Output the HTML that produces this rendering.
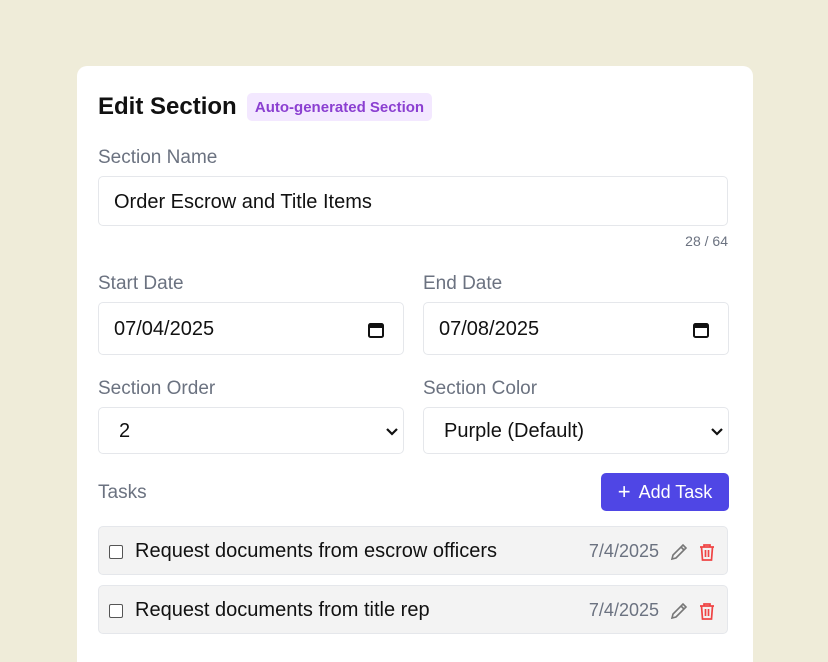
<!DOCTYPE html>
<html><head><style>
html,body{margin:0;width:828px;height:662px;overflow:hidden}
body{background:#efecd9;font-family:"Liberation Sans",sans-serif;position:relative}
.card{position:absolute;left:77px;top:66px;width:676px;height:596px;background:#fff;border-radius:10px 10px 0 0}
.a{position:absolute}
.lbl{font-size:19px;color:#6b7280}
.inp{position:absolute;border:1px solid #e5e7eb;border-radius:5px;box-sizing:border-box;background:#fff;font-size:20px;color:#111;display:flex;align-items:center;padding-left:15px;padding-top:2px}
.task{position:absolute;left:98px;width:630px;height:49px;background:#f3f3f3;border:1px solid #e5e7eb;border-radius:5px;box-sizing:border-box;display:flex;align-items:center;font-size:20px;color:#111;padding-top:2px}
.cb{width:12px;height:12px;border:1px solid #555;border-radius:2px;margin-left:10px;margin-right:12px;background:#fff}
.dt{position:absolute;right:68px;color:#6b7280;font-size:18px}
</style></head><body>
<div class="card"></div>
<div class="a" style="left:98px;top:93px;font-size:24px;font-weight:bold;color:#111">Edit Section</div>
<div class="a" style="left:247px;top:93px;width:185px;height:28px;background:#f3e8ff;border-radius:5px;color:#8b3fd1;font-size:15px;font-weight:bold;display:flex;align-items:center;justify-content:center">Auto-generated Section</div>
<div class="a lbl" style="left:98px;top:147px">Section Name</div>
<div class="inp" style="left:98px;top:176px;width:630px;height:50px">Order Escrow and Title Items</div>
<div class="a" style="right:100px;top:233px;font-size:14px;color:#6b7280">28 / 64</div>
<div class="a lbl" style="left:98px;top:273px">Start Date</div>
<div class="a lbl" style="left:423px;top:273px">End Date</div>
<div class="inp" style="left:98px;top:302px;width:306px;height:53px">07/04/2025<svg class="a" style="right:18px" width="18" height="18" viewBox="0 0 18 18"><rect x="2" y="3" width="14" height="13" rx="1.5" fill="none" stroke="#111" stroke-width="2"/><rect x="2" y="3" width="14" height="4" fill="#111"/></svg></div>
<div class="inp" style="left:423px;top:302px;width:306px;height:53px">07/08/2025<svg class="a" style="right:18px" width="18" height="18" viewBox="0 0 18 18"><rect x="2" y="3" width="14" height="13" rx="1.5" fill="none" stroke="#111" stroke-width="2"/><rect x="2" y="3" width="14" height="4" fill="#111"/></svg></div>
<div class="a lbl" style="left:98px;top:378px">Section Order</div>
<div class="a lbl" style="left:423px;top:378px">Section Color</div>
<div class="inp" style="left:98px;top:407px;width:306px;height:47px;padding-left:20px">2<svg class="a" style="right:4px" width="14" height="10" viewBox="0 0 14 10"><path d="M2 2l5 5 5-5" fill="none" stroke="#111" stroke-width="2.2"/></svg></div>
<div class="inp" style="left:423px;top:407px;width:306px;height:47px;padding-left:20px">Purple (Default)<svg class="a" style="right:4px" width="14" height="10" viewBox="0 0 14 10"><path d="M2 2l5 5 5-5" fill="none" stroke="#111" stroke-width="2.2"/></svg></div>
<div class="a lbl" style="left:98px;top:482px">Tasks</div>
<div class="a" style="left:601px;top:473px;width:128px;height:38px;background:#4f46e5;border-radius:5px;color:#fff;font-size:18px;display:flex;align-items:center;justify-content:center"><span style="font-size:22px;margin-right:8px;font-weight:300">+</span>Add Task</div>
<div class="task" style="top:526px"><div class="cb"></div>Request documents from escrow officers<span class="dt">7/4/2025</span>
<svg class="a" style="right:38px" width="20" height="20" viewBox="0 0 20 20"><path d="M3 17l1-4 10-10 3 3-10 10z M12 5l3 3" fill="none" stroke="#777" stroke-width="1.6"/></svg>
<svg class="a" style="right:11px" width="18" height="20" viewBox="0 0 18 20"><path d="M2 5h14 M6 5V3h6v2 M3.5 5l1 13h9l1-13 M7.5 8v7 M10.5 8v7" fill="none" stroke="#ef4444" stroke-width="1.7"/></svg></div>
<div class="task" style="top:585px"><div class="cb"></div>Request documents from title rep<span class="dt">7/4/2025</span>
<svg class="a" style="right:38px" width="20" height="20" viewBox="0 0 20 20"><path d="M3 17l1-4 10-10 3 3-10 10z M12 5l3 3" fill="none" stroke="#777" stroke-width="1.6"/></svg>
<svg class="a" style="right:11px" width="18" height="20" viewBox="0 0 18 20"><path d="M2 5h14 M6 5V3h6v2 M3.5 5l1 13h9l1-13 M7.5 8v7 M10.5 8v7" fill="none" stroke="#ef4444" stroke-width="1.7"/></svg></div>
</body></html>
